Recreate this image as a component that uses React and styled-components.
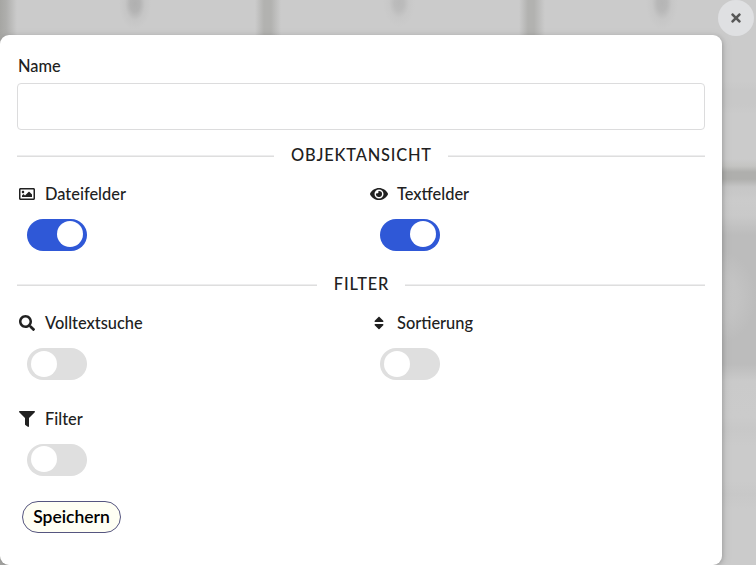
import React, { useState } from "react";
import styled, { createGlobalStyle } from "styled-components";
import { FaRegImage, FaEye, FaSearch, FaSort, FaFilter, FaTimes } from "react-icons/fa";

const GlobalStyle = createGlobalStyle`
  *, *::before, *::after { box-sizing: border-box; }
  body {
    margin: 0;
    overflow: hidden;
    background: #cbcbcb;
    color: #212121;
    font-family: Lato, sans-serif;
    font-size: 16.4px;
    font-weight: 500;
  }
`;

const Page = styled.div`
  position: relative;
  height: 565px;
  padding-top: 35px;
  overflow: hidden;
  background:
    radial-gradient(ellipse 16px 26px at 135px 4px, #b0b0b0 0%, #b4b4b4 30%, rgba(192, 192, 192, 0.5) 62%, rgba(203, 203, 203, 0) 100%),
    radial-gradient(ellipse 16px 24px at 399px 3px, #b9b9b9 0%, #bcbcbc 30%, rgba(196, 196, 196, 0.5) 62%, rgba(203, 203, 203, 0) 100%),
    radial-gradient(ellipse 16px 27px at 662px 3px, #b5b5b5 0%, #b8b8b8 30%, rgba(194, 194, 194, 0.5) 62%, rgba(203, 203, 203, 0) 100%),
    linear-gradient(90deg, #a6a6a3 0, #aeaeac 6px, rgba(203, 203, 203, 0) 17px),
    linear-gradient(90deg, rgba(203, 203, 203, 0) 255px, #b2b2b0 264px, #b2b2b0 271px, rgba(203, 203, 203, 0) 281px),
    linear-gradient(90deg, rgba(203, 203, 203, 0) 519px, #b2b2b0 528px, #b2b2b0 534px, rgba(203, 203, 203, 0) 545px)
    #cbcbcb;
`;

const BlurredEdge = styled.div`
  position: absolute;
  top: 36px;
  right: 0;
  bottom: 0;
  width: 40px;
  background:
    radial-gradient(ellipse 36px 46px at 4px 261px, #c5c5c5 0%, #c3c3c3 50%, rgba(195, 195, 195, 0) 100%),
    linear-gradient(180deg,
      #cbcbcb 0, #cbcbcb 45px, #c8c8c8 54px, #c8c8c8 68px, #cbcbcb 78px,
      #cbcbcb 123px, #c4c4c2 130px, #afafad 136px, #afafad 143px, #c6c6c6 151px,
      #cbcbcb 165px, #c9c9c9 180px, #bcbcbc 199px, #bcbcbc 328px,
      #cacaca 345px, #cbcbcb 380px, #c8c8c8 393px, #cbcbcb 410px,
      #cbcbcb 445px, #c8c8c8 458px, #cbcbcb 473px);
`;

const Dialog = styled.form`
  position: relative;
  display: flex;
  flex-direction: column;
  width: 722px;
  height: 530px;
  padding: 20px 17px 0;
  background: #fff;
  border-radius: 9px;
  box-shadow: 1px 1px 4px rgba(0, 0, 0, 0.17), 1px 2px 12px rgba(0, 0, 0, 0.08);
`;

const CloseButton = styled.button`
  position: absolute;
  top: 0;
  right: 2px;
  display: flex;
  align-items: center;
  justify-content: center;
  width: 36px;
  height: 36px;
  padding: 0;
  border: 0;
  border-radius: 50%;
  background: #dfe0e2;
  color: #575757;
  font-size: 14px;
`;

const Label = styled.label`
  display: flex;
  align-items: center;
  height: 22px;
`;

const LabelText = styled.span`
  line-height: 20px;
`;

const NameLabel = styled(Label)`
  padding-left: 1px;
`;

const TextInput = styled.input`
  width: 100%;
  height: 47px;
  margin-top: 6px;
  padding: 0 14px;
  border: 1px solid #dcdcdd;
  border-radius: 4px;
  background: #fff;
  font: inherit;
  outline: 0;
`;

const Divider = styled.h4`
  display: flex;
  align-items: center;
  height: 20px;
  margin: 15px 0 0;
  font-size: 16.4px;
  font-weight: 500;
  letter-spacing: 0.82px;
  text-transform: uppercase;

  &::before, &::after {
    content: "";
    flex: 1;
    height: 2px;
    margin: 1px 17px 0 0;
    background: linear-gradient(#ededee 50%, #dedede 50%);
  }

  &::after {
    margin: 1px 0 0 16px;
  }
`;

const DividerText = styled.span`
  line-height: 20px;
`;

const Fields = styled.div`
  display: grid;
  grid-template-columns: 353px 1fr;
  row-gap: 20px;
  margin-top: 18px;
`;

const Field = styled.div`
  display: flex;
  flex-direction: column;
  align-items: flex-start;
  height: 76px;
`;

const IconSlot = styled.span`
  display: flex;
  justify-content: center;
  width: ${({ $slot }) => $slot}px;
  margin-right: ${({ $gap }) => $gap}px;
  font-size: ${({ $size }) => $size}px;
`;

const Switch = styled.button`
  width: 60px;
  height: 32px;
  margin: 14px 0 0 10px;
  padding: ${({ $inset }) => $inset}px 4px 0;
  display: flex;
  justify-content: ${({ $on }) => ($on ? "flex-end" : "flex-start")};
  border: 0;
  border-radius: 16px;
  background: ${({ $on }) => ($on ? "#2f58d7" : "#dfdfdf")};

  &::before {
    content: "";
    width: 26px;
    height: 26px;
    border-radius: 50%;
    background: #fff;
  }
`;

const SaveButton = styled.button`
  align-self: flex-start;
  width: 99px;
  height: 32px;
  margin: 17px 0 0 5px;
  padding: 0 0 1px;
  border: 1px solid #565680;
  border-radius: 16px;
  background: #fffff4;
  color: #000;
  font: 600 17.5px Lato, sans-serif;
`;

function ToggleField({ icon: Icon, label, initial = false, slot = 20, gap = 8, size = 16, inset = 2 }) {
  const [on, setOn] = useState(initial);
  return (
    <Field>
      <Label>
        <IconSlot $slot={slot} $gap={gap} $size={size}><Icon /></IconSlot>
        <LabelText>{label}</LabelText>
      </Label>
      <Switch
        type="button"
        role="switch"
        aria-checked={on}
        aria-label={label}
        $on={on}
        $inset={inset}
        onClick={() => setOn(!on)}
      />
    </Field>
  );
}

export default function App() {
  return (
    <Page>
      <GlobalStyle />
      <BlurredEdge />
      <Dialog onSubmit={(event) => event.preventDefault()}>
        <NameLabel htmlFor="name"><LabelText>Name</LabelText></NameLabel>
        <TextInput id="name" />
        <Divider><DividerText>Objektansicht</DividerText></Divider>
        <Fields>
          <ToggleField icon={FaRegImage} label="Dateifelder" initial />
          <ToggleField icon={FaEye} label="Textfelder" slot={18} gap={9} size={18} initial />
        </Fields>
        <Divider><DividerText>Filter</DividerText></Divider>
        <Fields>
          <ToggleField icon={FaSearch} label="Volltextsuche" inset={3} />
          <ToggleField icon={FaSort} label="Sortierung" slot={18} gap={9} inset={3} />
          <ToggleField icon={FaFilter} label="Filter" />
        </Fields>
        <SaveButton type="submit">Speichern</SaveButton>
      </Dialog>
      <CloseButton type="button" aria-label="Schließen"><FaTimes /></CloseButton>
    </Page>
  );
}
